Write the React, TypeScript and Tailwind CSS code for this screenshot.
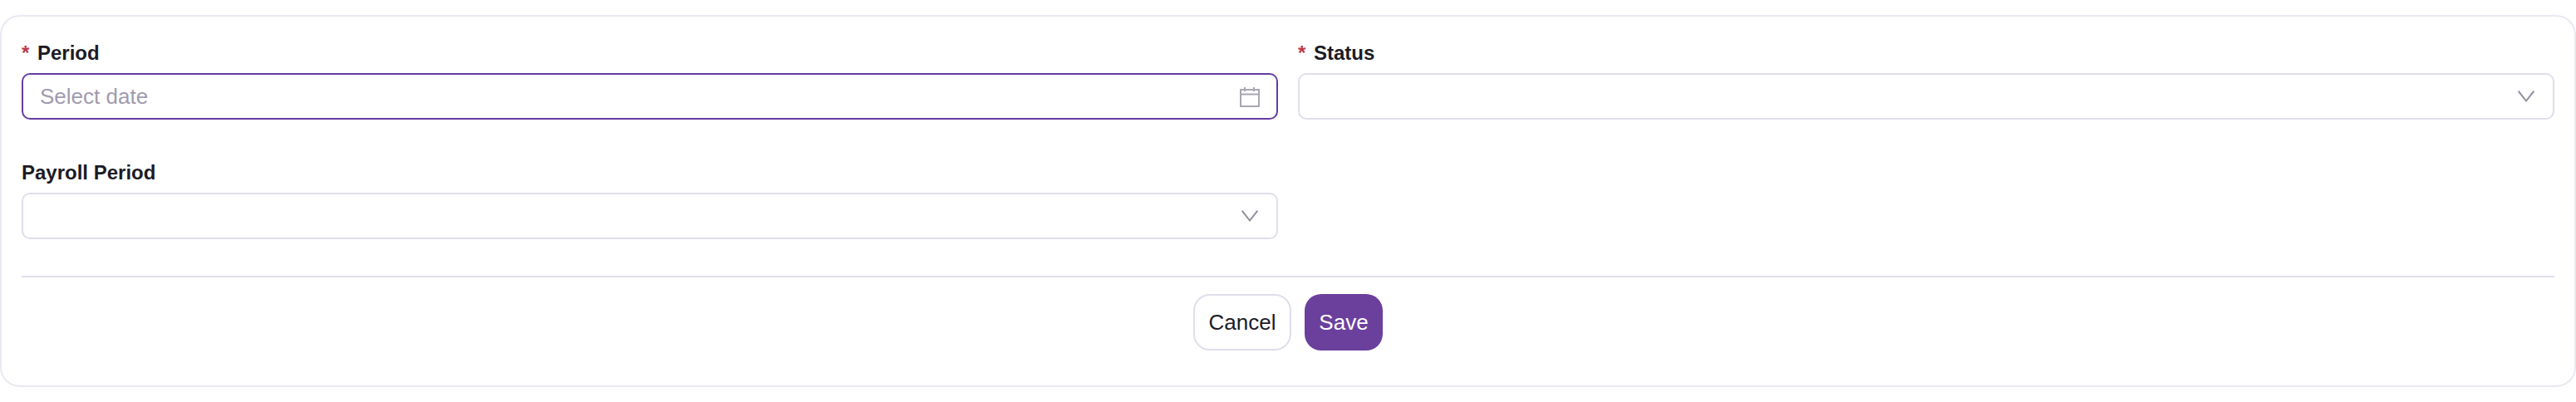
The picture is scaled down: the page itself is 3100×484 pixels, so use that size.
import React from 'react';

const Label = ({ text, required }: { text: string; required?: boolean }) => (
  <label className="flex items-center h-[40px] text-[24px] font-bold text-[#1c1b26]">
    {required && <span className="w-[19px] text-[#b93a4c]">*</span>}
    {text}
  </label>
);

const SelectBox = () => (
  <div className="flex items-center justify-end h-[56px] pr-[22px] bg-white border-2 border-[#e0deea] rounded-[10px]">
    <svg width="20" height="14" viewBox="0 0 20 14" fill="none" stroke="#948fa0" strokeWidth="2">
      <path d="M0.7 0.7 L10 12.5 L19.3 0.7" />
    </svg>
  </div>
);

export default function App() {
  return (
    <div className="w-[3100px] h-[484px] bg-white pt-[18px] font-['Liberation_Sans',Arial,sans-serif]">
      <div className="h-[448px] border-2 border-[#eae8f1] rounded-[24px] px-[24px] pt-[24px]">
        <div className="grid grid-cols-2 gap-x-[24px] gap-y-[44px]">
          <div className="flex flex-col gap-[4px]">
            <Label text="Period" required />
            <div className="flex items-center justify-between h-[56px] px-[20px] bg-white border-2 border-[#653c9f] rounded-[10px]">
              <span className="text-[26px] text-[#a09bae]">Select date</span>
              <svg className="mt-[2px]" width="24" height="24" viewBox="0 0 24 24" fill="none" stroke="#aaa6b4" strokeWidth="2">
                <rect x="1" y="3" width="22" height="20" />
                <path d="M1 8.5 H23 M6 0 V5 M17 0 V5" />
              </svg>
            </div>
          </div>
          <div className="flex flex-col gap-[4px]">
            <Label text="Status" required />
            <SelectBox />
          </div>
          <div className="flex flex-col gap-[4px]">
            <Label text="Payroll Period" />
            <SelectBox />
          </div>
        </div>
        <div className="h-[2px] bg-[#e0deea] mt-[44px]" />
        <div className="flex justify-center gap-[16px] mt-[20px]">
          <button className="w-[118px] h-[68px] text-[26px] text-[#1c1b26] bg-white border-2 border-[#e0deea] rounded-[20px]">Cancel</button>
          <button className="w-[94px] h-[68px] text-[26px] text-white bg-[#6b409d] rounded-[20px]">Save</button>
        </div>
      </div>
    </div>
  );
}
